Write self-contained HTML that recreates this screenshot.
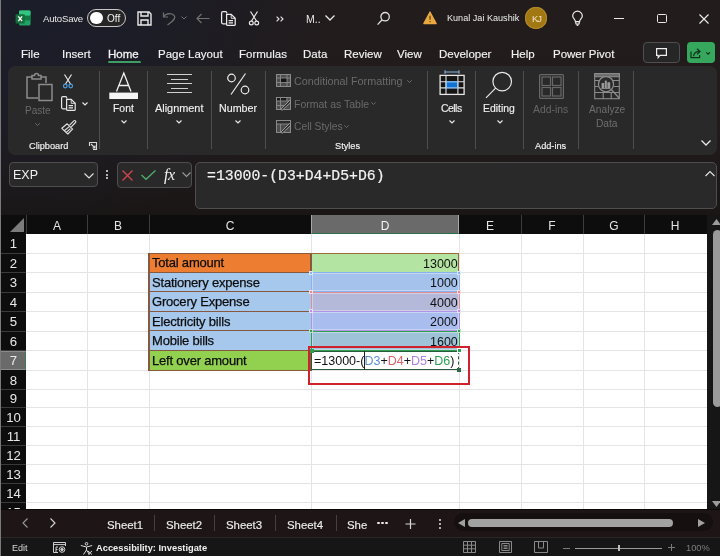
<!DOCTYPE html>
<html><head><meta charset="utf-8">
<style>
*{margin:0;padding:0;box-sizing:border-box}
html,body{width:720px;height:556px;overflow:hidden;background:#1d1c22}
body{position:relative;font-family:"Liberation Sans",sans-serif;color:#fff}
.a{position:absolute}
.t{position:absolute;white-space:nowrap;line-height:1;will-change:transform}
svg{position:absolute;overflow:visible}
#top{left:0;top:0;width:720px;height:215px;background:radial-gradient(ellipse 340px 230px at 0 0,#1b1d28 0%,rgba(27,29,40,0.92) 40%,rgba(27,29,40,0) 100%),linear-gradient(180deg,#221c1c 0px,#211b1c 130px,#1a1616 215px)}
#mid{display:none}
.tab{font-size:11.5px;color:#f2f2f2;top:48.5px;-webkit-text-stroke:0.15px #f2f2f2}
#ribbon{left:8px;top:66px;width:709px;height:89px;background:#292929;border-radius:7px}
.sep{position:absolute;width:1px;background:#4e4e4e;top:71px;height:78px}
.lbl{font-size:10.4px;color:#f0f0f0;-webkit-text-stroke:0.15px #f0f0f0}
.dis{color:#6e6e6e}
.glbl{font-size:9.2px;color:#f2f2f2;top:142px;-webkit-text-stroke:0.15px #f2f2f2}
/* grid */
#grid{left:1px;top:215px;width:706px;height:294px;background:#fff}
.ch{position:absolute;top:215px;height:18.5px;background:#0c0c0c;color:#e6e6e6;font-size:12px;text-align:center;line-height:18.5px;border-right:1px solid #3a3a3a}
.rh{position:absolute;left:1px;width:25px;background:#0c0c0c;color:#e6e6e6;font-size:12.5px;text-align:center}
.gl{position:absolute;background:#e4e4e4}
.cell{position:absolute;font-size:13px;color:#111;white-space:nowrap;line-height:1}
.cl{font-size:13px;color:#0d0d0d;letter-spacing:-0.2px;-webkit-text-stroke:0.25px #0d0d0d}
.cv{font-size:12.5px;color:#111}
.sh{font-size:11.4px;color:#ececec;top:520px;-webkit-text-stroke:0.15px #ececec}
</style></head><body>
<div id="top" class="a"></div>
<div id="mid" class="a"></div>
<!-- left window border -->


<!-- ===== TITLE BAR ===== -->
<svg style="left:14.6px;top:9.6px" width="16" height="16" viewBox="0 0 16 16">
  <rect x="4" y="0.5" width="11.5" height="15" rx="1.5" fill="#21a366"/>
  <rect x="4" y="5.5" width="11.5" height="5" fill="#107c41"/>
  <rect x="4" y="0.5" width="11.5" height="5" rx="1" fill="#33c481"/>
  <rect x="0.6" y="4.2" width="9.2" height="9.2" rx="1" fill="#16703d"/>
  <path d="M3.3 6.4 L7.1 11.2 M7.1 6.4 L3.3 11.2" stroke="#fff" stroke-width="1.3"/>
</svg>
<div class="t" style="left:43px;top:13.6px;font-size:9.6px;color:#e8e8e8;letter-spacing:-0.2px">AutoSave</div>
<div class="a" style="left:87px;top:9px;width:39px;height:18.3px;border:1.5px solid #c8c8c8;border-radius:9.2px;background:#262626"></div>
<div class="a" style="left:90.2px;top:11.5px;width:12.8px;height:12.8px;border-radius:50%;background:#fff"></div>
<div class="t" style="left:107px;top:13.5px;font-size:10px;color:#f0f0f0">Off</div>
<!-- save -->
<svg style="left:137px;top:11px" width="15" height="15" viewBox="0 0 15 15" fill="none" stroke="#eaeaea" stroke-width="1.4">
  <path d="M1 1 H12 L14 3 V14 H1 Z"/><path d="M4 1 V5 H11 V1"/><path d="M4 14 V9 H11 V14"/>
</svg>
<!-- undo -->
<svg style="left:162px;top:11px" width="14" height="14" viewBox="0 0 14 14" fill="none" stroke="#6f6f6f" stroke-width="1.2">
  <path d="M1.5 1.5 V6 H6"/><path d="M1.7 5.8 C4 2 10.5 1.5 12.5 5 C13.5 7 12.5 9 5.5 14"/>
</svg>
<svg style="left:181px;top:16px" width="6" height="4" viewBox="0 0 6 4" fill="none" stroke="#6f6f6f" stroke-width="1"><path d="M0.5 0.5 L3 3 L5.5 0.5"/></svg>
<!-- back arrow -->
<svg style="left:196px;top:13px" width="14" height="11" viewBox="0 0 14 11" fill="none" stroke="#6f6f6f" stroke-width="1.2"><path d="M13.5 5.5 H1 M5.5 1 L1 5.5 L5.5 10"/></svg>
<!-- copy -->
<svg style="left:220.5px;top:11px" width="15" height="15" viewBox="0 0 15 15" fill="none" stroke="#ececec" stroke-width="1.25">
  <path d="M5.8 2.6 V1.9 Q5.8 0.6 4.6 0.6 H1.9 Q0.6 0.6 0.6 1.9 V11.6 Q0.6 12.8 1.9 12.8 H4.9"/>
  <path d="M5.6 3.4 H10.2 L14.2 7.3 V13.4 Q14.2 14.4 13.2 14.4 H6.6 Q5.6 14.4 5.6 13.4 Z"/>
  <path d="M10.2 3.4 V7.3 H14.2" stroke-width="0.9"/>
  <path d="M7.6 9.6 H12 M7.6 11.9 H12"/>
</svg>
<!-- scissors -->
<svg style="left:249px;top:11px" width="10" height="15" viewBox="0 0 10 15" fill="none" stroke="#eaeaea" stroke-width="1.2">
  <path d="M1.5 0.5 L7.5 10 M8.5 0.5 L2.5 10"/><circle cx="2.3" cy="12" r="1.9"/><circle cx="7.7" cy="12" r="1.9"/>
</svg>
<svg style="left:275.5px;top:16px" width="8" height="6" viewBox="0 0 8 6" fill="none" stroke="#e8e8e8" stroke-width="1.1"><path d="M0.6 0.6 L3 3 L0.6 5.4 M4.6 0.6 L7 3 L4.6 5.4"/></svg>
<div class="t" style="left:305.5px;top:13.5px;font-size:10.5px;color:#e8e8e8">M..</div>
<svg style="left:325px;top:14.5px" width="10" height="6" viewBox="0 0 10 6" fill="none" stroke="#e8e8e8" stroke-width="1.3"><path d="M0.5 0.5 L5 5 L9.5 0.5"/></svg>
<!-- search -->
<svg style="left:377px;top:10.5px" width="14" height="15" viewBox="0 0 14 15" fill="none" stroke="#e0e0e0" stroke-width="1.3"><circle cx="8.1" cy="5.7" r="4.2"/><path d="M5.1 8.8 L0.6 13.6"/></svg>
<!-- warning -->
<svg style="left:423px;top:11.2px" width="14" height="14" viewBox="0 0 14 14"><path d="M7 1 L13.2 12.6 H0.8 Z" fill="#eba841" stroke="#eba841" stroke-width="1.2" stroke-linejoin="round"/><path d="M7 4.8 V8.8" stroke="#4a3010" stroke-width="1.1"/><circle cx="7" cy="10.6" r="0.65" fill="#4a3010"/></svg>
<div class="t" style="left:446.5px;top:14.2px;font-size:9.1px;color:#ececec">Kunal Jai Kaushik</div>
<div class="a" style="left:525.3px;top:7.4px;width:21.6px;height:21.6px;border-radius:50%;background:#a27812;box-shadow:inset 0 0 0 1px #b08a30"></div>
<div class="t" style="left:528.5px;top:14.2px;font-size:9.4px;color:#f3e7c7;width:15px;text-align:center;letter-spacing:-1px">KJ</div>
<!-- lightbulb -->
<svg style="left:571.5px;top:10.5px" width="11" height="15" viewBox="0 0 11 15" fill="none" stroke="#ececec" stroke-width="1.2"><path d="M3.4 10.6 C3.4 8.4 0.7 7.4 0.7 5 A4.8 4.8 0 0 1 10.3 5 C10.3 7.4 7.6 8.4 7.6 10.6 Z"/><path d="M3.8 10.8 V12.3 Q3.8 13.2 4.7 13.2 H6.3 Q7.2 13.2 7.2 12.3 V10.8"/><path d="M4.6 14.3 H6.4"/></svg>
<!-- window controls -->
<div class="a" style="left:614px;top:17.5px;width:10px;height:1.2px;background:#e8e8e8"></div>
<div class="a" style="left:657px;top:13.5px;width:9.5px;height:9.5px;border:1.2px solid #e8e8e8;border-radius:1.5px"></div>
<svg style="left:699px;top:13.5px" width="10" height="10" viewBox="0 0 10 10" stroke="#e8e8e8" stroke-width="1.2"><path d="M0.5 0.5 L9.5 9.5 M9.5 0.5 L0.5 9.5"/></svg>

<!-- ===== TABS ===== -->
<div class="t tab" style="left:20.5px">File</div>
<div class="t tab" style="left:61.5px">Insert</div>
<div class="t tab" style="left:107.5px;-webkit-text-stroke:0.3px #f2f2f2">Home</div>
<div class="a" style="left:108px;top:61px;width:33px;height:2px;background:#3f9d63;border-radius:1px"></div>
<div class="t tab" style="left:158px">Page Layout</div>
<div class="t tab" style="left:239px">Formulas</div>
<div class="t tab" style="left:303px">Data</div>
<div class="t tab" style="left:344px">Review</div>
<div class="t tab" style="left:397px">View</div>
<div class="t tab" style="left:439px">Developer</div>
<div class="t tab" style="left:510.5px">Help</div>
<div class="t tab" style="left:552.5px">Power Pivot</div>
<div class="a" style="left:643px;top:42px;width:37px;height:21px;border:1px solid #4f4f4f;border-radius:4px;background:#262626"></div>
<svg style="left:656px;top:47.5px" width="11" height="11" viewBox="0 0 11 11" fill="none" stroke="#f0f0f0" stroke-width="1.2"><path d="M0.6 0.6 H10.4 V7.4 H4 L2.2 9.6 V7.4 H0.6 Z"/></svg>
<div class="a" style="left:687px;top:42px;width:28px;height:21px;border-radius:4px;background:#36a85d"></div>
<svg style="left:690px;top:47px" width="22" height="12" viewBox="0 0 22 12" fill="none" stroke="#10301a" stroke-width="1.2"><path d="M1 4.5 V10.6 H9.6 V8"/><path d="M3.6 9.2 C3.8 6.2 5.6 4.6 9 4.6"/><path d="M7 1.8 L10 4.6 L7 7.4"/><path d="M16.3 5.3 L18.1 7.1 L19.9 5.3"/></svg>

<!-- ===== RIBBON ===== -->
<div id="ribbon" class="a"></div>
<!-- clipboard group -->
<svg style="left:26px;top:73px" width="28" height="29" viewBox="0 0 28 29" fill="none" stroke="#8c8c8c" stroke-width="1.5">
  <path d="M12 25 H1 V4 H6"/><path d="M15 4 H20 V10"/><path d="M6 2.5 H8.5 A2 2 0 0 1 12.5 2.5 H15 V6 H6 Z"/>
  <rect x="13" y="11.5" width="13" height="16"/>
</svg>
<div class="t dis" style="left:25px;top:106.3px;font-size:10px;color:#6a6a6a">Paste</div>
<svg style="left:34.5px;top:122.5px" width="5" height="3" viewBox="0 0 5 3" fill="none" stroke="#6a6a6a" stroke-width="1"><path d="M0.3 0.3 L2.5 2.5 L4.7 0.3"/></svg>
<svg style="left:63px;top:73.5px" width="10" height="15" viewBox="0 0 10 15" fill="none" stroke-width="1.2">
  <path d="M1.5 0.5 L7.5 10 M8.5 0.5 L2.5 10" stroke="#e6e6e6"/><circle cx="2.3" cy="12" r="1.8" stroke="#4b9fe0"/><circle cx="7.7" cy="12" r="1.8" stroke="#4b9fe0"/>
</svg>
<svg style="left:61px;top:96px" width="15" height="15" viewBox="0 0 15 15" fill="none" stroke="#e6e6e6" stroke-width="1.2">
  <path d="M5.8 2.6 V1.9 Q5.8 0.6 4.6 0.6 H1.9 Q0.6 0.6 0.6 1.9 V11.6 Q0.6 12.8 1.9 12.8 H4.9"/>
  <path d="M5.6 3.4 H10.2 L14.2 7.3 V13.4 Q14.2 14.4 13.2 14.4 H6.6 Q5.6 14.4 5.6 13.4 Z"/>
  <path d="M10.2 3.4 V7.3 H14.2" stroke-width="0.9"/>
  <path d="M7.6 9.6 H12 M7.6 11.9 H12"/>
</svg>
<svg style="left:82px;top:101.5px" width="6" height="4" viewBox="0 0 6 4" fill="none" stroke="#e6e6e6" stroke-width="1.2"><path d="M0.5 0.5 L3 3 L5.5 0.5"/></svg>
<svg style="left:60.5px;top:118.5px" width="16" height="16" viewBox="0 0 16 16" fill="none" stroke="#e0e0e0" stroke-width="1.15" stroke-linejoin="round">
  <path d="M8.6 6.2 L12.8 1.9 Q13.7 1.1 14.5 1.9 Q15.3 2.7 14.5 3.5 L10.3 7.9"/>
  <path d="M6.2 4.8 L11.6 10.2 L6.8 15 L0.8 9.3 Z"/>
  <path d="M3.2 11.7 L8.6 7.4 M5.2 13.4 L9.5 9.6"/>
</svg>
<div class="t glbl" style="left:28.5px">Clipboard</div>
<svg style="left:89px;top:142px" width="8" height="8" viewBox="0 0 8 8" fill="none" stroke="#d8d8d8" stroke-width="1.1"><path d="M0.5 4 V0.5 H7.5 V7.5 H4"/><path d="M2 2 L6 6 M6 3.5 V6 H3.5"/></svg>
<div class="sep" style="left:99px"></div>
<!-- font -->
<svg style="left:109px;top:71.5px" width="30" height="28" viewBox="0 0 30 28">
  <path d="M7.5 19.5 L14.8 1 L22 19.5 M10 13.5 H19.5" fill="none" stroke="#f0f0f0" stroke-width="1.3"/>
  <rect x="0.3" y="20.6" width="28.7" height="6.4" fill="#f4f4f4"/>
</svg>
<div class="t lbl" style="left:113px;top:103.8px">Font</div>
<svg style="left:120.5px;top:120px" width="6" height="4" viewBox="0 0 6 4" fill="none" stroke="#e6e6e6" stroke-width="1.2"><path d="M0.5 0.5 L3 3 L5.5 0.5"/></svg>
<div class="sep" style="left:147px"></div>
<!-- alignment -->
<div class="a" style="left:167px;top:74px;width:25px;height:1.3px;background:#d0d0d0"></div>
<div class="a" style="left:171px;top:78.5px;width:17px;height:1.3px;background:#d0d0d0"></div>
<div class="a" style="left:167px;top:83px;width:25px;height:1.3px;background:#d0d0d0"></div>
<div class="a" style="left:171px;top:87.5px;width:17px;height:1.3px;background:#d0d0d0"></div>
<div class="a" style="left:167px;top:92px;width:25px;height:1.3px;background:#d0d0d0"></div>
<div class="t lbl" style="left:154.8px;top:102.9px;font-size:10.9px">Alignment</div>
<svg style="left:176px;top:120px" width="6" height="4" viewBox="0 0 6 4" fill="none" stroke="#e6e6e6" stroke-width="1.2"><path d="M0.5 0.5 L3 3 L5.5 0.5"/></svg>
<div class="sep" style="left:211px"></div>
<!-- number -->
<svg style="left:227px;top:73px" width="23" height="22" viewBox="0 0 23 22" fill="none" stroke="#ececec" stroke-width="1.2">
  <circle cx="4.5" cy="5" r="3.8"/><circle cx="18" cy="17" r="3.8"/><path d="M18.5 0.5 L4 21.5"/>
</svg>
<div class="t lbl" style="left:219.3px;top:103px;font-size:10.7px">Number</div>
<svg style="left:235px;top:120px" width="6" height="4" viewBox="0 0 6 4" fill="none" stroke="#e6e6e6" stroke-width="1.2"><path d="M0.5 0.5 L3 3 L5.5 0.5"/></svg>
<div class="sep" style="left:265px"></div>
<!-- styles -->
<svg style="left:276px;top:74px" width="15" height="13" viewBox="0 0 15 13">
  <rect x="0.5" y="0.5" width="14" height="12" fill="#4d4d4d" stroke="#8a8a8a" stroke-width="1"/>
  <rect x="5" y="4" width="6" height="4.5" fill="#141414"/>
  <path d="M0.5 4 H14.5 M0.5 8.5 H14.5 M4.5 0.5 V12.5 M11 0.5 V12.5" stroke="#8a8a8a" stroke-width="0.9"/>
</svg>
<div class="t" style="left:294px;top:76.1px;font-size:10.8px;color:#6a6a6a">Conditional Formatting</div>
<svg style="left:406.5px;top:80px" width="5" height="3" viewBox="0 0 5 3" fill="none" stroke="#6a6a6a" stroke-width="1"><path d="M0.3 0.3 L2.5 2.5 L4.7 0.3"/></svg>
<svg style="left:276px;top:96.8px" width="15" height="13" viewBox="0 0 15 13">
  <rect x="0.5" y="0.5" width="14" height="12" fill="#4d4d4d" stroke="#8a8a8a" stroke-width="1"/>
  <rect x="1" y="1" width="3.5" height="3" fill="#1a1a1a"/><rect x="5" y="1" width="5.5" height="3" fill="#1a1a1a"/>
  <path d="M0.5 4 H14.5 M0.5 8.5 H8 M4.5 0.5 V12.5 M11 0.5 V4" stroke="#8a8a8a" stroke-width="0.9"/>
  <path d="M4.5 12.5 L13.5 3.5 L15 5 L6.5 13 Z" fill="#2a2a2a" stroke="#9a9a9a" stroke-width="1"/>
</svg>
<div class="t" style="left:294px;top:98.6px;font-size:10.5px;color:#6a6a6a">Format as Table</div>
<svg style="left:371px;top:102px" width="5" height="3" viewBox="0 0 5 3" fill="none" stroke="#6a6a6a" stroke-width="1"><path d="M0.3 0.3 L2.5 2.5 L4.7 0.3"/></svg>
<svg style="left:276px;top:119.8px" width="15" height="13" viewBox="0 0 15 13">
  <rect x="0.5" y="0.5" width="14" height="12" fill="#4d4d4d" stroke="#8a8a8a" stroke-width="1"/>
  <rect x="1" y="1" width="13" height="3" fill="#2a2a2a"/>
  <path d="M0.5 4 H14.5 M4.5 4 V12.5" stroke="#8a8a8a" stroke-width="0.9"/>
  <path d="M4.5 12.5 L13.5 3.5 L15 5 L6.5 13 Z" fill="#2a2a2a" stroke="#9a9a9a" stroke-width="1"/>
</svg>
<div class="t" style="left:294px;top:121.5px;font-size:10.3px;color:#6a6a6a">Cell Styles</div>
<svg style="left:344px;top:125px" width="5" height="3" viewBox="0 0 5 3" fill="none" stroke="#6a6a6a" stroke-width="1"><path d="M0.3 0.3 L2.5 2.5 L4.7 0.3"/></svg>
<div class="t glbl" style="left:334.5px">Styles</div>
<div class="sep" style="left:427px"></div>
<!-- cells -->
<svg style="left:438.5px;top:69.5px" width="26" height="26" viewBox="0 0 26 26" fill="none">
  <path d="M6 2 H20 M6 0.3 V3.7 M20 0.3 V3.7" stroke="#86b4e4" stroke-width="1.1"/>
  <rect x="1.1" y="5.4" width="24" height="19" fill="#141414"/><rect x="7" y="11.8" width="11.9" height="6.1" fill="#0f72d4" stroke="#6fb0f0" stroke-width="1"/>
  <rect x="1.1" y="5.4" width="24" height="19" stroke="#e6e6e6" stroke-width="1.3"/>
  <path d="M1.1 11.8 H7 M18.9 11.8 H25.1 M1.1 17.9 H7 M18.9 17.9 H25.1 M7 5.4 V11.8 M18.9 5.4 V11.8 M7 17.9 V24.4 M18.9 17.9 V24.4 M7 5.4 V24.4 M18.9 5.4 V24.4" stroke="#e0e0e0" stroke-width="1.1"/>
  <path d="M7 11.8 H18.9 M7 17.9 H18.9" stroke="#8cc0f2" stroke-width="1"/>
</svg>
<div class="t lbl" style="left:440.5px;top:103.5px;letter-spacing:-0.5px">Cells</div>
<svg style="left:448.5px;top:119.8px" width="6" height="4" viewBox="0 0 6 4" fill="none" stroke="#e6e6e6" stroke-width="1.2"><path d="M0.5 0.5 L3 3 L5.5 0.5"/></svg>
<div class="sep" style="left:475px"></div>
<!-- editing -->
<svg style="left:485px;top:71px" width="28" height="28" viewBox="0 0 28 28" fill="none" stroke="#e8e8e8" stroke-width="1.2">
  <circle cx="17.2" cy="10.6" r="9.3"/><path d="M10.6 17.2 L1 26.8"/>
</svg>
<div class="t lbl" style="left:483px;top:103.5px">Editing</div>
<svg style="left:496.5px;top:119.8px" width="6" height="4" viewBox="0 0 6 4" fill="none" stroke="#e6e6e6" stroke-width="1.2"><path d="M0.5 0.5 L3 3 L5.5 0.5"/></svg>
<div class="sep" style="left:523px"></div>
<!-- add-ins -->
<svg style="left:539px;top:73.5px" width="25" height="25" viewBox="0 0 25 25" fill="none" stroke="#686868" stroke-width="1.2">
  <rect x="0.6" y="0.6" width="23.8" height="23.8" rx="1"/><rect x="3" y="3" width="8.5" height="8.5"/><rect x="13.5" y="3" width="8.5" height="8.5"/><rect x="3" y="13.5" width="8.5" height="8.5"/><rect x="13.5" y="13.5" width="8.5" height="8.5"/>
</svg>
<div class="t" style="left:532.5px;top:105px;font-size:10.4px;color:#666">Add-ins</div>
<div class="t glbl" style="left:535px">Add-ins</div>
<div class="sep" style="left:578px"></div>
<!-- analyze -->
<svg style="left:593.5px;top:73px" width="26" height="26" viewBox="0 0 26 26" fill="none" stroke="#8c8c8c" stroke-width="1.1">
  <rect x="0.7" y="0.7" width="24.6" height="25"/><rect x="0.7" y="0.7" width="24.6" height="3" fill="#6a6a6a"/>
  <path d="M0.7 7.5 H5 M19 7.5 H25.3 M0.7 13.5 H4 M20 13.5 H25.3 M0.7 19.5 H25.3 M9.2 19.5 V25.7 M17.2 19.5 V25.7"/>
  <circle cx="12" cy="11.2" r="7.6" stroke-width="1.3" fill="#2a2a2a"/><path d="M17.5 16.7 L25.3 25.3" stroke-width="1.3"/>
  <rect x="7.6" y="10" width="2.6" height="5.2" fill="#9a9a9a" stroke="none"/><rect x="10.8" y="7.6" width="2" height="7.6" fill="#9a9a9a" stroke="none"/><rect x="13.4" y="9.2" width="2.8" height="6" fill="#9a9a9a" stroke="none"/>
  <path d="M7.4 15.5 H16.4" stroke="#9a9a9a" stroke-width="0.8"/>
</svg>
<div class="t" style="left:588.5px;top:105px;font-size:10.2px;color:#6e6e6e">Analyze</div>
<div class="t" style="left:595.5px;top:119.2px;font-size:10.2px;color:#6e6e6e">Data</div>
<div class="sep" style="left:633px"></div>
<svg style="left:701px;top:139.5px" width="10" height="6" viewBox="0 0 10 6" fill="none" stroke="#e8e8e8" stroke-width="1.3"><path d="M0.5 0.5 L5 5 L9.5 0.5"/></svg>

<!-- ===== FORMULA BAR ===== -->
<div class="a" style="left:8.5px;top:162px;width:89px;height:25px;border:1px solid #4e4e4e;border-radius:4px;background:#292929"></div>
<div class="t" style="left:13px;top:169.3px;font-size:12.5px;color:#f0f0f0">EXP</div>
<svg style="left:84px;top:172.5px" width="10" height="6" viewBox="0 0 10 6" fill="none" stroke="#e0e0e0" stroke-width="1.2"><path d="M0.5 0.5 L5 5 L9.5 0.5"/></svg>
<div class="a" style="left:106px;top:170px;width:2px;height:2px;background:#e8e8e8;border-radius:1px"></div>
<div class="a" style="left:106px;top:173.5px;width:2px;height:2px;background:#e8e8e8;border-radius:1px"></div>
<div class="a" style="left:106px;top:177px;width:2px;height:2px;background:#e8e8e8;border-radius:1px"></div>
<div class="a" style="left:116.5px;top:162px;width:75.5px;height:25.5px;border:1px solid #4e4e4e;border-radius:4px;background:#292929"></div>
<svg style="left:121.5px;top:169.5px" width="11" height="11" viewBox="0 0 11 11" stroke="#d4464d" stroke-width="1.3"><path d="M0.5 0.5 L10.5 10.5 M10.5 0.5 L0.5 10.5"/></svg>
<svg style="left:140.5px;top:169.5px" width="15" height="10" viewBox="0 0 15 10" fill="none" stroke="#4fae6b" stroke-width="1.3"><path d="M0.5 5 L5 9.3 L14.5 0.5"/></svg>
<div class="t" style="left:163.5px;top:166.5px;font-size:16px;color:#f2f2f2;font-family:'Liberation Serif',serif;font-style:italic;letter-spacing:-0.5px">fx</div>
<svg style="left:181.5px;top:172px" width="9" height="5" viewBox="0 0 9 5" fill="none" stroke="#9a9a9a" stroke-width="1.1"><path d="M0.5 0.5 L4.5 4.5 L8.5 0.5"/></svg>
<div class="a" style="left:195px;top:162px;width:522px;height:47px;border:1px solid #504d4d;border-radius:5px;background:#292929"></div>
<div class="t" style="left:206.5px;top:169.2px;font-size:14.8px;color:#f2f2f2;font-family:'Liberation Mono',monospace;-webkit-text-stroke:0.2px #f2f2f2">=13000-(D3+D4+D5+D6)</div>
<svg style="left:705px;top:171px" width="10" height="5.5" viewBox="0 0 10 5.5" fill="none" stroke="#e0e0e0" stroke-width="1.2"><path d="M0.5 5 L5 0.5 L9.5 5"/></svg>

<!-- ===== GRID ===== -->
<div id="grid" class="a"></div>
<!--GRID-->
<div class="a" style="left:1px;top:215px;width:706px;height:18.5px;background:#0d0d0d"></div>
<div class="a" style="left:1px;top:233.5px;width:25px;height:276px;background:#0d0d0d"></div>
<svg style="left:10px;top:217.5px" width="14" height="14" viewBox="0 0 14 14"><path d="M14 0 V14 H0 Z" fill="#7c7c7c"/></svg>
<div class="a" style="left:311px;top:215px;width:148.2px;height:18.5px;background:#6a6a6a;border-left:1px solid #a8a8a8;border-right:1px solid #a8a8a8;border-bottom:1.5px solid #2d6e4a"></div>
<div class="a" style="left:26px;top:215px;width:1px;height:18.5px;background:#3c3c3c"></div>
<div class="a" style="left:87px;top:215px;width:1px;height:18.5px;background:#3c3c3c"></div>
<div class="a" style="left:149px;top:215px;width:1px;height:18.5px;background:#3c3c3c"></div>
<div class="a" style="left:521.4px;top:215px;width:1px;height:18.5px;background:#3c3c3c"></div>
<div class="a" style="left:583.2px;top:215px;width:1px;height:18.5px;background:#3c3c3c"></div>
<div class="a" style="left:644.3px;top:215px;width:1px;height:18.5px;background:#3c3c3c"></div>
<div class="t" style="left:36.5px;width:40px;text-align:center;top:219.5px;font-size:12px;color:#e4e4e4">A</div>
<div class="t" style="left:98.0px;width:40px;text-align:center;top:219.5px;font-size:12px;color:#e4e4e4">B</div>
<div class="t" style="left:210.0px;width:40px;text-align:center;top:219.5px;font-size:12px;color:#e4e4e4">C</div>
<div class="t" style="left:365.1px;width:40px;text-align:center;top:219.5px;font-size:12px;color:#f4f4f4">D</div>
<div class="t" style="left:470.29999999999995px;width:40px;text-align:center;top:219.5px;font-size:12px;color:#e4e4e4">E</div>
<div class="t" style="left:532.3px;width:40px;text-align:center;top:219.5px;font-size:12px;color:#e4e4e4">F</div>
<div class="t" style="left:593.75px;width:40px;text-align:center;top:219.5px;font-size:12px;color:#e4e4e4">G</div>
<div class="t" style="left:655.45px;width:40px;text-align:center;top:219.5px;font-size:12px;color:#e4e4e4">H</div>
<div class="gl" style="left:87px;top:233.5px;width:1px;height:275.5px"></div>
<div class="gl" style="left:149px;top:233.5px;width:1px;height:275.5px"></div>
<div class="gl" style="left:311px;top:233.5px;width:1px;height:275.5px"></div>
<div class="gl" style="left:459.2px;top:233.5px;width:1px;height:275.5px"></div>
<div class="gl" style="left:521.4px;top:233.5px;width:1px;height:275.5px"></div>
<div class="gl" style="left:583.2px;top:233.5px;width:1px;height:275.5px"></div>
<div class="gl" style="left:644.3px;top:233.5px;width:1px;height:275.5px"></div>
<div class="gl" style="left:26px;top:252.80px;width:680.6px;height:1px"></div>
<div class="a" style="left:1px;top:252.80px;width:25px;height:1px;background:#3a3a3a"></div>
<div class="t" style="left:1px;width:25px;text-align:center;top:237.20px;font-size:13.2px;color:#e8e8e8">1</div>
<div class="gl" style="left:26px;top:272.10px;width:680.6px;height:1px"></div>
<div class="a" style="left:1px;top:272.10px;width:25px;height:1px;background:#3a3a3a"></div>
<div class="t" style="left:1px;width:25px;text-align:center;top:256.75px;font-size:13.2px;color:#e8e8e8">2</div>
<div class="gl" style="left:26px;top:291.50px;width:680.6px;height:1px"></div>
<div class="a" style="left:1px;top:291.50px;width:25px;height:1px;background:#3a3a3a"></div>
<div class="t" style="left:1px;width:25px;text-align:center;top:276.10px;font-size:13.2px;color:#e8e8e8">3</div>
<div class="gl" style="left:26px;top:310.90px;width:680.6px;height:1px"></div>
<div class="a" style="left:1px;top:310.90px;width:25px;height:1px;background:#3a3a3a"></div>
<div class="t" style="left:1px;width:25px;text-align:center;top:295.50px;font-size:13.2px;color:#e8e8e8">4</div>
<div class="gl" style="left:26px;top:330.50px;width:680.6px;height:1px"></div>
<div class="a" style="left:1px;top:330.50px;width:25px;height:1px;background:#3a3a3a"></div>
<div class="t" style="left:1px;width:25px;text-align:center;top:315.00px;font-size:13.2px;color:#e8e8e8">5</div>
<div class="gl" style="left:26px;top:350.10px;width:680.6px;height:1px"></div>
<div class="a" style="left:1px;top:350.10px;width:25px;height:1px;background:#3a3a3a"></div>
<div class="t" style="left:1px;width:25px;text-align:center;top:334.60px;font-size:13.2px;color:#e8e8e8">6</div>
<div class="gl" style="left:26px;top:369.90px;width:680.6px;height:1px"></div>
<div class="a" style="left:1px;top:350.6px;width:25px;height:19.80px;background:#6a6a6a;border-right:1.5px solid #3f7656;border-top:1px solid #8a8a8a;border-bottom:1px solid #8a8a8a"></div>
<div class="t" style="left:1px;width:25px;text-align:center;top:354.30px;font-size:13.2px;color:#e8e8e8">7</div>
<div class="gl" style="left:26px;top:388.70px;width:680.6px;height:1px"></div>
<div class="a" style="left:1px;top:388.70px;width:25px;height:1px;background:#3a3a3a"></div>
<div class="t" style="left:1px;width:25px;text-align:center;top:373.60px;font-size:13.2px;color:#e8e8e8">8</div>
<div class="gl" style="left:26px;top:407.40px;width:680.6px;height:1px"></div>
<div class="a" style="left:1px;top:407.40px;width:25px;height:1px;background:#3a3a3a"></div>
<div class="t" style="left:1px;width:25px;text-align:center;top:392.35px;font-size:13.2px;color:#e8e8e8">9</div>
<div class="gl" style="left:26px;top:426.10px;width:680.6px;height:1px"></div>
<div class="a" style="left:1px;top:426.10px;width:25px;height:1px;background:#3a3a3a"></div>
<div class="t" style="left:1px;width:25px;text-align:center;top:411.05px;font-size:13.2px;color:#e8e8e8">10</div>
<div class="gl" style="left:26px;top:444.80px;width:680.6px;height:1px"></div>
<div class="a" style="left:1px;top:444.80px;width:25px;height:1px;background:#3a3a3a"></div>
<div class="t" style="left:1px;width:25px;text-align:center;top:429.75px;font-size:13.2px;color:#e8e8e8">11</div>
<div class="gl" style="left:26px;top:463.90px;width:680.6px;height:1px"></div>
<div class="a" style="left:1px;top:463.90px;width:25px;height:1px;background:#3a3a3a"></div>
<div class="t" style="left:1px;width:25px;text-align:center;top:448.65px;font-size:13.2px;color:#e8e8e8">12</div>
<div class="gl" style="left:26px;top:482.80px;width:680.6px;height:1px"></div>
<div class="a" style="left:1px;top:482.80px;width:25px;height:1px;background:#3a3a3a"></div>
<div class="t" style="left:1px;width:25px;text-align:center;top:467.65px;font-size:13.2px;color:#e8e8e8">13</div>
<div class="gl" style="left:26px;top:501.90px;width:680.6px;height:1px"></div>
<div class="a" style="left:1px;top:501.90px;width:25px;height:1px;background:#3a3a3a"></div>
<div class="t" style="left:1px;width:25px;text-align:center;top:486.65px;font-size:13.2px;color:#e8e8e8">14</div>
<div class="t" style="left:1px;width:25px;text-align:center;top:505.80px;font-size:13.2px;color:#e8e8e8">15</div>
<div class="a" style="left:149px;top:253.3px;width:162px;height:19.30px;background:#ed7d31"></div>
<div class="a" style="left:311px;top:253.3px;width:148.2px;height:19.30px;background:#b4e4a1"></div>
<div class="a" style="left:149px;top:272.6px;width:162px;height:19.40px;background:#a6c8ec"></div>
<div class="a" style="left:311px;top:272.6px;width:148.2px;height:19.40px;background:#a4c2ec"></div>
<div class="a" style="left:149px;top:292px;width:162px;height:19.40px;background:#a6c8ec"></div>
<div class="a" style="left:311px;top:292px;width:148.2px;height:19.40px;background:#b4b8d9"></div>
<div class="a" style="left:149px;top:311.4px;width:162px;height:19.60px;background:#a6c8ec"></div>
<div class="a" style="left:311px;top:311.4px;width:148.2px;height:19.60px;background:#a9bdef"></div>
<div class="a" style="left:149px;top:331px;width:162px;height:19.60px;background:#a6c8ec"></div>
<div class="a" style="left:311px;top:331px;width:148.2px;height:19.60px;background:#9ec3d9"></div>
<div class="a" style="left:149px;top:350.6px;width:162px;height:19.80px;background:#92d050"></div>
<div class="a" style="left:148.5px;top:252.55px;width:163px;height:1.2px;background:#875a40"></div>
<div class="a" style="left:148.5px;top:271.85px;width:163px;height:1.2px;background:#875a40"></div>
<div class="a" style="left:148.5px;top:291.25px;width:163px;height:1.2px;background:#875a40"></div>
<div class="a" style="left:148.5px;top:310.65px;width:163px;height:1.2px;background:#875a40"></div>
<div class="a" style="left:148.5px;top:330.25px;width:163px;height:1.2px;background:#875a40"></div>
<div class="a" style="left:148.5px;top:349.85px;width:163px;height:1.2px;background:#875a40"></div>
<div class="a" style="left:148.5px;top:369.65px;width:163px;height:1.2px;background:#875a40"></div>
<div class="a" style="left:148.25px;top:252.55px;width:1.5px;height:118.60px;background:#875a40"></div>
<div class="a" style="left:310.25px;top:252.55px;width:1.5px;height:19.30px;background:#875a40"></div>
<div class="a" style="left:310.25px;top:349.85px;width:1.5px;height:21.30px;background:#875a40"></div>
<div class="a" style="left:311px;top:252.55px;width:148.2px;height:1.5px;background:#9a6a34"></div>
<div class="a" style="left:457.7px;top:252.55px;width:1.5px;height:19.30px;background:#9a6a34"></div>
<div class="t cl" style="left:151.5px;top:256.40px">Total amount</div>
<div class="t cl" style="left:151.5px;top:275.80px">Stationery expense</div>
<div class="t cl" style="left:151.5px;top:295.20px">Grocery Expense</div>
<div class="t cl" style="left:151.5px;top:314.80px">Electricity bills</div>
<div class="t cl" style="left:151.5px;top:334.40px">Mobile bills</div>
<div class="t cl" style="left:151.5px;top:354.20px">Left over amount</div>
<div class="t cv" style="right:262.5px;top:257.80px">13000</div>
<div class="t cv" style="right:262.5px;top:277.20px">1000</div>
<div class="t cv" style="right:262.5px;top:296.60px">4000</div>
<div class="t cv" style="right:262.5px;top:316.20px">2000</div>
<div class="t cv" style="right:262.5px;top:335.80px">1600</div>
<div class="a" style="left:310.5px;top:272.10px;width:149.2px;height:20.40px;border:1px solid #86b2ee;box-shadow:inset 0 0 0 1px rgba(255,255,255,0.35)"></div>
<div class="a" style="left:310.5px;top:291.50px;width:149.2px;height:20.40px;border:1px solid #e08d98;box-shadow:inset 0 0 0 1px rgba(255,255,255,0.35)"></div>
<div class="a" style="left:310.5px;top:310.90px;width:149.2px;height:20.60px;border:1px solid #b291e8;box-shadow:inset 0 0 0 1px rgba(255,255,255,0.35)"></div>
<div class="a" style="left:310.5px;top:330.50px;width:149.2px;height:20.60px;border:1px solid #2f9f4f;box-shadow:inset 0 0 0 1px rgba(255,255,255,0.35)"></div>
<div class="a" style="left:309px;top:270.60px;width:4px;height:4px;background:#86b2ee;border:0.7px solid rgba(255,255,255,0.7)"></div>
<div class="a" style="left:457.2px;top:270.60px;width:4px;height:4px;background:#86b2ee;border:0.7px solid rgba(255,255,255,0.7)"></div>
<div class="a" style="left:309px;top:290.00px;width:4px;height:4px;background:#e08d98;border:0.7px solid rgba(255,255,255,0.7)"></div>
<div class="a" style="left:457.2px;top:290.00px;width:4px;height:4px;background:#e08d98;border:0.7px solid rgba(255,255,255,0.7)"></div>
<div class="a" style="left:309px;top:309.40px;width:4px;height:4px;background:#b291e8;border:0.7px solid rgba(255,255,255,0.7)"></div>
<div class="a" style="left:457.2px;top:309.40px;width:4px;height:4px;background:#b291e8;border:0.7px solid rgba(255,255,255,0.7)"></div>
<div class="a" style="left:309px;top:329.00px;width:4px;height:4px;background:#2f9f4f;border:0.7px solid rgba(255,255,255,0.7)"></div>
<div class="a" style="left:457.2px;top:329.00px;width:4px;height:4px;background:#2f9f4f;border:0.7px solid rgba(255,255,255,0.7)"></div>
<div class="a" style="left:309px;top:348.60px;width:4px;height:4px;background:#2f9f4f;border:0.7px solid rgba(255,255,255,0.7)"></div>
<div class="a" style="left:457.2px;top:348.60px;width:4px;height:4px;background:#2f9f4f;border:0.7px solid rgba(255,255,255,0.7)"></div>
<div class="a" style="left:311px;top:350.6px;width:148.2px;height:19.80px;background:#fff;border:1.3px solid #2a5a3c;border-right:1.3px dashed #2a5a3c"></div>
<div class="a" style="left:309px;top:348.6px;width:4.5px;height:4.5px;background:#2f9f4f"></div>
<div class="a" style="left:456.7px;top:348.10px;width:5px;height:5px;background:#2f9f4f;border:1px solid #fff"></div>
<div class="a" style="left:456.7px;top:367.90px;width:4.5px;height:4.5px;background:#2a6a44"></div>
<div class="t cv" style="left:314px;top:354.80px">=13000-(<span style="color:#5b8fd8">D3</span>+<span style="color:#e0636b">D4</span>+<span style="color:#a983e0">D5</span>+<span style="color:#2f9e4d">D6</span>)</div>
<div class="a" style="left:364.2px;top:351.1px;width:1px;height:18.80px;background:#222"></div>
<div class="a" style="left:308px;top:346px;width:161.8px;height:38.6px;border:2.7px solid #d0222b"></div>
<!--/GRID-->
<!-- vertical scrollbar -->
<div class="a" style="left:707px;top:215px;width:13px;height:294px;background:#161616"></div>
<svg style="left:712px;top:219px" width="9" height="6" viewBox="0 0 9 6"><path d="M4.5 0 L9 6 H0 Z" fill="#9c9c9c"/></svg>
<div class="a" style="left:712.5px;top:230px;width:9px;height:177px;background:#9a9a9a;border-radius:4.5px"></div>
<svg style="left:712px;top:500.5px" width="9" height="6" viewBox="0 0 9 6"><path d="M4.5 6 L9 0 H0 Z" fill="#9c9c9c"/></svg>
<!-- sheet tab bar -->
<div class="a" style="left:0;top:509px;width:720px;height:28px;background:#1e1616;border-top:1px solid #0c0909"></div>
<div class="a" style="left:0;top:509px;width:1px;height:47px;background:#3e3e3e"></div>
<svg style="left:21.5px;top:518px" width="6" height="10" viewBox="0 0 6 10" fill="none" stroke="#9a9a9a" stroke-width="1.1"><path d="M5.5 0.5 L1 5 L5.5 9.5"/></svg>
<svg style="left:50px;top:518px" width="6" height="10" viewBox="0 0 6 10" fill="none" stroke="#d8d8d8" stroke-width="1.1"><path d="M0.5 0.5 L5 5 L0.5 9.5"/></svg>
<div class="t sh" style="left:106.5px">Sheet1</div>
<div class="a" style="left:154px;top:515px;width:1px;height:16px;background:#4a3d3d"></div>
<div class="t sh" style="left:165.5px">Sheet2</div>
<div class="a" style="left:214px;top:515px;width:1px;height:16px;background:#4a3d3d"></div>
<div class="t sh" style="left:226px">Sheet3</div>
<div class="a" style="left:274.5px;top:515px;width:1px;height:16px;background:#4a3d3d"></div>
<div class="t sh" style="left:286.5px">Sheet4</div>
<div class="a" style="left:335.5px;top:515px;width:1px;height:16px;background:#4a3d3d"></div>
<div class="t sh" style="left:346.5px">She</div>
<div class="a" style="left:376.8px;top:521.5px;width:2.8px;height:2.8px;background:#e8e8e8;border-radius:50%"></div>
<div class="a" style="left:380.8px;top:521.5px;width:2.8px;height:2.8px;background:#e8e8e8;border-radius:50%"></div>
<div class="a" style="left:384.8px;top:521.5px;width:2.8px;height:2.8px;background:#e8e8e8;border-radius:50%"></div>
<svg style="left:405px;top:518.5px" width="11" height="10" viewBox="0 0 11 10" stroke="#d8d8d8" stroke-width="1.2"><path d="M5.5 0 V10 M0.5 5 H10.5"/></svg>
<div class="a" style="left:438.5px;top:518.5px;width:2.2px;height:2.2px;background:#e0e0e0;border-radius:50%"></div>
<div class="a" style="left:438.5px;top:522.5px;width:2.2px;height:2.2px;background:#e0e0e0;border-radius:50%"></div>
<div class="a" style="left:438.5px;top:526.5px;width:2.2px;height:2.2px;background:#e0e0e0;border-radius:50%"></div>
<!-- h scrollbar -->
<div class="a" style="left:454px;top:513px;width:259px;height:18px;background:#150f0f;border-radius:9px"></div>
<svg style="left:457.5px;top:519px" width="7" height="8" viewBox="0 0 7 8"><path d="M0 4 L7 0 V8 Z" fill="#a0a0a0"/></svg>
<div class="a" style="left:468px;top:518.5px;width:205px;height:8.5px;background:#a2a2a2;border-radius:4.5px"></div>
<svg style="left:697.5px;top:519px" width="7" height="8" viewBox="0 0 7 8"><path d="M7 4 L0 0 V8 Z" fill="#a0a0a0"/></svg>
<!-- status bar -->
<div class="a" style="left:1px;top:537px;width:719px;height:19px;background:#161616;border-top:1.5px solid #2a2727"></div>
<div class="t" style="left:11.5px;top:543.5px;font-size:9px;color:#d8d8d8">Edit</div>
<svg style="left:53px;top:542px" width="13" height="11" viewBox="0 0 13 11" fill="none" stroke="#d0d0d0" stroke-width="1"><path d="M0.5 0.5 H12.5 V4 M0.5 0.5 V10.5 H5 M0.5 2.6 H12.5"/><path d="M3 5 V10 M3 5 H5 M3 7.5 H4.5"/><circle cx="9" cy="7.5" r="2.8"/><circle cx="9" cy="7.5" r="1.2" fill="#d0d0d0"/></svg>
<svg style="left:80px;top:541.5px" width="13" height="13" viewBox="0 0 13 13" fill="none" stroke="#d8d8d8" stroke-width="1"><circle cx="6.5" cy="1.8" r="1.3"/><path d="M0.8 3.5 L6.5 5 L12.2 3.5 M6.5 5 V8 L3.5 12.5 M6.5 8 L9.5 12.5"/><path d="M8 9 L12 12.5 M12 9 L8 12.5"/></svg>
<div class="t" style="left:96px;top:543.7px;font-size:9.3px;color:#f0f0f0;font-weight:bold">Accessibility: Investigate</div>
<svg style="left:463px;top:541px" width="13" height="12" viewBox="0 0 13 12" fill="none" stroke="#8a8a8a" stroke-width="1"><path d="M0.5 0.5 H12.5 V11.5 H0.5 Z M0.5 4.2 H12.5 M0.5 7.8 H12.5 M4.5 0.5 V11.5 M8.5 0.5 V11.5"/></svg>
<svg style="left:499px;top:541px" width="13" height="12" viewBox="0 0 13 12" fill="none" stroke="#8a8a8a" stroke-width="1"><path d="M0.5 0.5 H12.5 V11.5 H0.5 Z M2.8 2.5 H10.2 V9.5 H2.8 Z M4.5 4.5 H8.5 M4.5 6 H8.5 M4.5 7.5 H8.5"/></svg>
<svg style="left:533.5px;top:541px" width="14" height="12" viewBox="0 0 14 12" fill="none" stroke="#8a8a8a" stroke-width="1"><path d="M0.5 0.5 H13.5 V11.5 H0.5 Z M4.5 0.5 V7 H9.5 V0.5"/></svg>
<div class="a" style="left:563px;top:547.5px;width:7px;height:1px;background:#7a7a7a"></div>
<div class="a" style="left:575px;top:547.5px;width:87px;height:1px;background:#9a9a9a"></div>
<div class="a" style="left:618px;top:544.5px;width:1.5px;height:6px;background:#bdbdbd"></div>
<svg style="left:667.5px;top:544px" width="7" height="7" viewBox="0 0 7 7" stroke="#7a7a7a" stroke-width="1"><path d="M3.5 0 V7 M0 3.5 H7"/></svg>
<div class="t" style="left:685.5px;top:543.5px;font-size:9.3px;color:#7e7e7e">100%</div>

<div class="a" style="left:0;top:0;width:1px;height:556px;background:#7a7a7a"></div>
</body></html>
